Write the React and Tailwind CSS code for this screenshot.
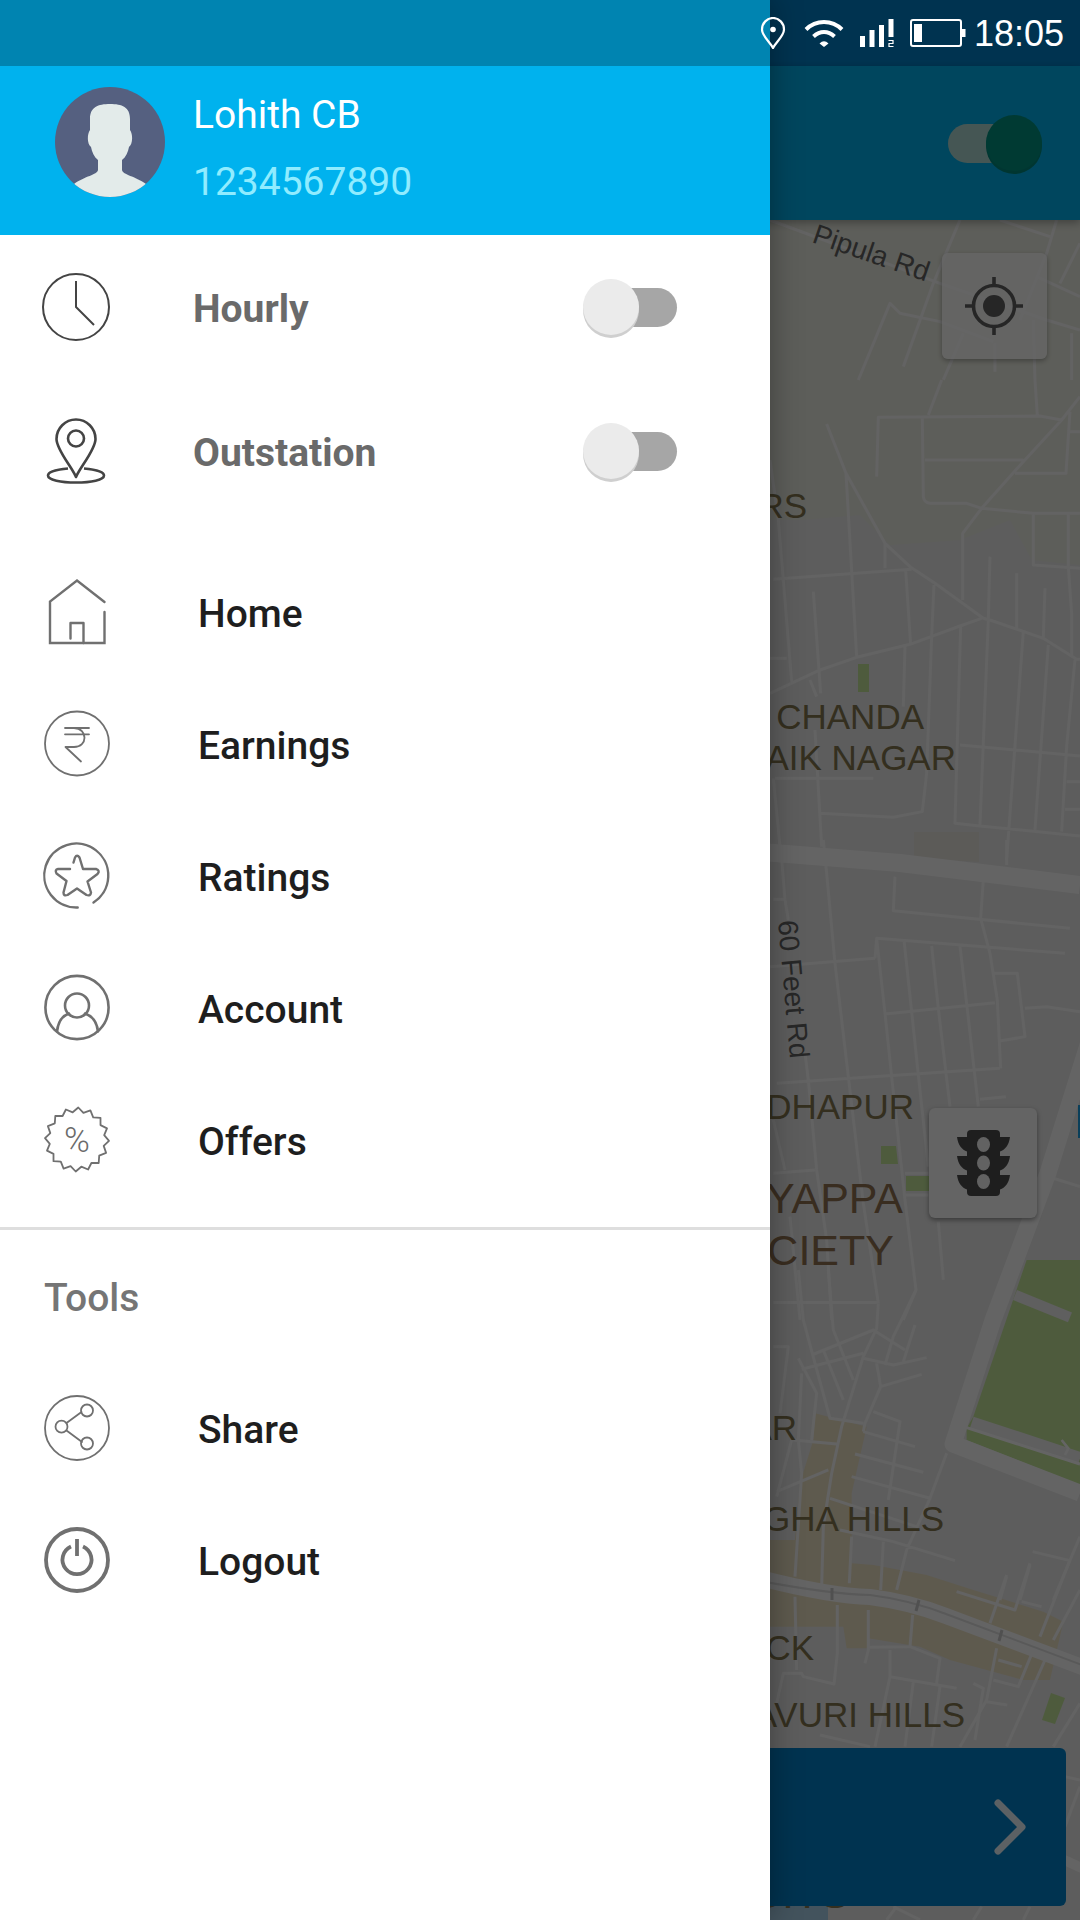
import { useState } from 'react'

const LINE_ICONS = {
  home: (
    <g strokeWidth="2.4">
      <path d="M60.5 22 33 0.5 6 21.5V63H60.5V32" strokeLinejoin="miter" />
      <path d="M26.5 58.5V43H39.5V63" />
    </g>
  ),
  earnings: (
    <g strokeWidth="1.8">
      <circle cx="33" cy="31.5" r="32" />
      <path d="M21 16H45M21 22.3H45M21 16H30C44 16.5 44 35 30 35H21.5L37 49.5" />
    </g>
  ),
  ratings: (
    <g strokeWidth="2.4">
      <path d="M49.5 58.5A32 32 0 1 0 33.7 63.5" />
      <path d="M29.5 18.5 31 13.5Q33 10 35.5 13.5L39 25H52Q56.5 26.5 53.5 30L43.5 37.5 47 48.5Q46.5 52.5 42.5 51L33 44.5 23.5 51Q19.5 52.5 19.5 48.5L22.5 37 12.5 29.5Q10.5 25.5 14 25H26" />
    </g>
  ),
  account: (
    <g strokeWidth="2.6">
      <circle cx="33" cy="31.5" r="31.6" />
      <circle cx="33" cy="29.5" r="12" />
      <path d="M13 55.5C14 46 18 40 25 37.5M41 37.5C48 40 53 46 54 55.5" />
    </g>
  ),
  offers: (
    <g strokeWidth="1.8">
      <polygon points={burstPoints(33, 31.5, 32, 27.5, 16)} />
      <text
        x="33"
        y="43.5"
        textAnchor="middle"
        fontSize="35"
        fontWeight="300"
        fill="#6b6b6b"
        stroke="none"
      >
        %
      </text>
    </g>
  ),
  share: (
    <g strokeWidth="1.8">
      <circle cx="33" cy="32" r="32" />
      <circle cx="43" cy="14.5" r="6" />
      <circle cx="17.5" cy="30.7" r="6" />
      <circle cx="43" cy="47.5" r="6" />
      <path d="M22.5 27 37.5 16M22.5 34.5 38 46" />
    </g>
  ),
  logout: (
    <g strokeWidth="3.8">
      <circle cx="33" cy="32" r="31" />
      <path d="M27 18.5A14.5 14.5 0 1 0 39 18.5" strokeLinecap="butt" />
      <path d="M33 11V28" strokeLinecap="butt" />
    </g>
  )
}

const NAV_ITEMS = [
  { id: 'home', label: 'Home' },
  { id: 'earnings', label: 'Earnings' },
  { id: 'ratings', label: 'Ratings' },
  { id: 'account', label: 'Account' },
  { id: 'offers', label: 'Offers' }
]

const TOOL_ITEMS = [
  { id: 'share', label: 'Share' },
  { id: 'logout', label: 'Logout' }
]

// Local streets, grouped by map tile. Tile units are a third of a map unit.
const STREET_TILES = [
  {
    x: 700,
    y: 0,
    d: 'M210 660 720 850M1040 960 1140 990M720 850 1040 960M780 660 700 850 610 1100M900 660 1050 710M1070 660 1040 760 960 960M1140 730 1080 850M1140 890 1010 830M475 1140 570 910 600 940 720 965 880 1025M790 1000 730 1140M885 1030V1115M1000 960 1005 1140M1115 1000V1140'
  },
  {
    x: 760,
    y: 380,
    d: 'M545 0 505 105M825 0 832 105M350 290 355 112 840 108 905 120M960 50 905 120 790 245 665 385 608 460V660M487 115 490 350Q492 368 510 370H620L665 385 820 400H960M495 240H790M765 280H918L930 95M930 155H960M820 400V555L960 565M925 400V560L935 700V830M200 132 258 280 375 490 450 560 525 610 670 715 690 720 850 775 950 838H960M258 280 290 830M375 490V565M40 598 455 568M30 240 55 420 95 905M160 635 182 940M437 570 452 795M522 615 515 770M30 940 180 870 290 832 450 793 600 738 665 715M690 530 685 720 660 1335M770 580V745M855 625 850 775M435 800 430 980M515 770 500 1180 487 1295 400 1312 180 1300M602 740 585 1330 660 1338 960 1368M790 755 740 1440M865 795 825 1350M945 840 920 1100 905 1355M45 1195H340M600 1095 960 1128M165 1050 185 1400M30 835H80M40 1195 60 1400M150 900 170 950M920 1205H960M915 1288H960'
  },
  {
    x: 760,
    y: 840,
    d: 'M65 60 75 180 85 240M40 178H75M190 0 200 100 225 370 265 710 310 1090 355 1390M405 110 400 212 930 265M670 120 662 235 690 340 712 480 722 685M740 0V75M345 355 350 295 915 340M350 295 375 520 395 710 435 1080 468 1350 430 1440M432 300 455 515 475 705 505 980M515 318 535 505 570 800M600 318 620 490 655 800M375 522 705 488M700 400H772L795 590 720 603M795 505 860 500 960 515M30 380 345 355M50 730 720 685M660 778 738 770M135 640 145 720 170 990 200 1200 215 1440M40 1000 165 990M40 840 75 990M90 1130 120 1440M435 1000H505M435 1065H505M535 1145 550 1320M40 1388H350M880 1015 960 1040'
  },
  {
    x: 760,
    y: 1240,
    d: 'M115 90 130 240 165 370 210 535 310 550M205 90 220 270 280 420M355 190 350 265 310 350 245 560 215 700 190 860 185 1040M468 150 400 290 375 375M155 345 340 270 435 330M125 388 310 340M310 355 400 375 500 353M465 255 430 365M350 370 362 440 315 550 310 575M362 440 485 403M115 355 170 460 155 600M125 400 115 600 125 700 105 1010M190 330 250 480M40 320H85L60 520M340 515 420 545 385 780M310 575 465 620M285 642 490 697M275 710 510 775M100 600 230 612M50 755 205 690M95 600 50 770M210 775 470 860M240 870 400 905 585 962M275 890 268 1030M370 905 362 1050M560 640 510 775 440 930 410 1050M818 935 930 962M960 890 880 1080M810 975 780 1080M740 1010 720 1080'
  },
  {
    x: 760,
    y: 1560,
    d: 'M740 45 690 190M590 95 765 150 810 10M785 125 845 140M930 0 840 230M960 90 880 240M960 430 880 560M105 110 110 330M232 135V280L222 372 130 350 125 340H70L50 430M325 150V270L315 310M458 165 450 260M325 262 450 260 540 295 530 370M390 270V350L345 560M390 350 590 385M460 365 435 560M540 380 515 560M710 265 680 420 600 560M715 300 785 320M700 360 775 380 820 270M640 370 670 385 645 540M680 425 742 435M180 525 330 560M855 300 740 560M915 650 960 660M960 680 915 800M380 1080 410 1040M640 1080 665 1040M790 1080 810 1040M400 1040 480 1080'
  }
]

const PLACE_LABELS = [
  { text: 'RS', x: 807, y: 518, size: 35 },
  { text: 'CHANDA', x: 924, y: 729, size: 35 },
  { text: 'AIK NAGAR', x: 956, y: 770, size: 35 },
  { text: 'DHAPUR', x: 914, y: 1119, size: 35 },
  { text: 'YAPPA', x: 903, y: 1213, size: 43, warm: true },
  { text: 'CIETY', x: 894, y: 1265, size: 43, warm: true },
  { text: 'AR', x: 797, y: 1440, size: 35 },
  { text: 'GHA HILLS', x: 944, y: 1531, size: 35 },
  { text: 'CK', x: 814, y: 1660, size: 35 },
  { text: 'AVURI HILLS', x: 965, y: 1727, size: 35 },
  { text: 'GITS', x: 849, y: 1908, size: 43 }
]

function burstPoints(cx, cy, outer, inner, count) {
  const points = []
  for (let i = 0; i < count * 2; i++) {
    const radius = i % 2 === 0 ? outer : inner
    const angle = (Math.PI * i) / count - Math.PI / 2 + 0.04
    points.push(`${(cx + radius * Math.cos(angle)).toFixed(1)},${(cy + radius * Math.sin(angle)).toFixed(1)}`)
  }
  return points.join(' ')
}

function StatusBar() {
  return (
    <div className="[grid-area:1/1] z-30 self-start h-[66px] pr-4 flex items-center justify-end gap-2 text-white">
      <div className="flex items-center gap-4">
        <svg className="w-7 h-8" viewBox="0 0 28 32" fill="none" stroke="currentColor" strokeWidth="2.2">
          <path d="M13 31C10 25 2 19 2 12.5A11 11.5 0 0 1 24 12.5C24 19 16 25 13 31Z" />
          <circle cx="13" cy="12.5" r="2.8" fill="currentColor" stroke="none" />
        </svg>
        <svg className="w-10 h-7" viewBox="0 0 40 28" fill="none" stroke="currentColor" strokeWidth="4">
          <path d="M2 10.5C12 .5 28 .5 38 10.5" />
          <path d="M9.5 17.5C16 11.5 24 11.5 30.5 17.5" />
          <path d="M15.5 24.5Q20 20 24.5 24.5L20 28Z" fill="currentColor" stroke="none" />
        </svg>
        <svg className="w-[34px] h-7" viewBox="0 0 34 28" fill="currentColor">
          <path d="M0 17H5V28H0ZM9.5 11H14.5V28H9.5ZM19 6H24V28H19ZM28.5 0H33.5V18H28.5Z" />
          <path d="M28.5 21.5H33V24.5H29V27.5H33.5" fill="none" stroke="currentColor" strokeWidth="1.2" />
        </svg>
        <svg className="w-14 h-7" viewBox="0 0 56 28">
          <rect x="1" y="1" width="50" height="26" rx="2" fill="none" stroke="currentColor" strokeWidth="2" />
          <path d="M4 5H12V23H4ZM52 10H55.5V18H52Z" fill="currentColor" />
        </svg>
      </div>
      <time className="pt-0.5 font-['Liberation_Sans',sans-serif] text-[36px] leading-none">18:05</time>
    </div>
  )
}

function Switch({ checked, onChange, label, id }) {
  return (
    <span className="relative flex items-center w-[94px] h-14 flex-shrink-0">
      <input
        id={id}
        type="checkbox"
        role="switch"
        aria-label={label}
        checked={checked}
        onChange={(e) => onChange(e.target.checked)}
        className="peer absolute inset-0 z-10 w-full h-full opacity-0 cursor-pointer"
      />
      <span className="w-[86px] h-[39px] rounded-full ml-2 bg-[#a6a6a6] peer-checked:ml-0 peer-checked:bg-[#add7d2]" />
      <span className="absolute left-0 top-0 w-14 h-14 rounded-full bg-[#ebebeb] shadow-[0_3px_0_#cfcfcf] peer-checked:left-auto peer-checked:right-0 peer-checked:bg-[#009180] peer-checked:shadow-[0_3px_0_#00887c]" />
    </span>
  )
}

function CityMap() {
  return (
    <svg
      className="absolute inset-0 w-full h-full font-['Liberation_Sans',sans-serif]"
      viewBox="0 220 1080 1700"
      preserveAspectRatio="xMaxYMin slice"
      role="img"
      aria-label="Map"
    >
      <rect y="220" width="1080" height="1700" fill="#e8e8e8" />
      <path d="M0 220H1080V565L1032 560 1010 520 960 540 890 545 860 515 800 520 0 520Z" fill="#e9ebe0" />

      {/* Built-up areas and parks */}
      <g transform="translate(760 1240) scale(.3333)">
        <path d="M165 520 320 560 275 760V970L340 975 500 1005 640 1050 850 1115 910 1145 870 1320H790L570 1260 480 1220 325 1195 320 1225H260L250 1160H0V900H105L120 730 160 600Z" fill="#ebe1c3" />
        <path d="M800 60H960V735L620 600V565L640 530Z" fill="#c2e498" />
        <path d="M765 165 930 232" stroke="#ededed" strokeWidth="32" />
        <path d="M635 548 960 655" stroke="#ededed" strokeWidth="38" />
        <path d="M620 563 960 672" stroke="#fbfbfb" strokeWidth="9" />
        <path d="M905 600 925 625 915 645" fill="none" stroke="#fbfbfb" strokeWidth="8" />
      </g>
      <path d="M858 664H869V692H858Z" fill="#c2e498" />
      <path d="M881 1146H896L898 1164H881ZM906 1176H930V1191H906Z" fill="#c2e498" />
      <path d="M1051 1693 1065 1698 1055 1724 1042 1720Z" fill="#c2e498" />
      <path d="M914 832H979V862L914 858Z" fill="#e6e3dc" />
      <path d="M760 1904H828V1920H760Z" fill="#a8cfe8" />
      <path d="M1078 1105H1080V1138H1078Z" fill="#1a9fe0" />

      {/* Streets */}
      {STREET_TILES.map((tile) => (
        <path
          key={tile.y}
          d={tile.d}
          transform={`translate(${tile.x} ${tile.y}) scale(.3333)`}
          fill="none"
          stroke="#f7f7f7"
          strokeWidth="9"
          strokeLinejoin="round"
        />
      ))}
      <g fill="none" stroke="#fafafa" strokeLinejoin="round">
        <path d="M700 847 900 863 1080 885" strokeWidth="18" />
        <path d="M1088 1045 1048 1173 993 1320 953 1444 1080 1493" strokeWidth="17" />
        <path d="M760 1578Q830 1596 870 1597Q910 1602 946 1616L1090 1670" strokeWidth="16" />
        <path d="M760 1581Q830 1594 870 1595Q910 1600 946 1614L1090 1668" stroke="#dedede" strokeWidth="2" />
        <path d="M832 1588V1600M919 1600 916 1611M1002 1630 999 1641" stroke="#c8c8c8" strokeWidth="3" />
        <path d="M1060 1858 1090 1872" strokeWidth="10" />
      </g>

      {/* Labels */}
      <text transform="translate(811 242) rotate(19)" fontSize="28" fill="#626262">
        Pipula Rd
      </text>
      <text transform="translate(778 921) rotate(85)" fontSize="28" fill="#626262">
        60 Feet Rd
      </text>
      {PLACE_LABELS.map((place) => (
        <text
          key={place.text}
          x={place.x}
          y={place.y}
          fontSize={place.size}
          textAnchor="end"
          fill={place.warm ? '#8f7050' : '#82754e'}
        >
          {place.text}
        </text>
      ))}
    </svg>
  )
}

function MapScreen({ online, onOnlineChange }) {
  return (
    <div className="[grid-area:1/1] flex flex-col">
      <div className="h-[66px] bg-[#0080c8]" />
      <header className="relative z-10 h-[154px] pr-[38px] flex items-center justify-end bg-[#00b0ea] shadow-[0_3px_8px_rgba(0,0,0,0.3)]">
        <Switch checked={online} onChange={onOnlineChange} label="Online" id="online" />
      </header>
      <main className="relative flex-1 flex flex-col">
        <CityMap />
        <div className="relative flex-1 flex flex-col items-end pt-[33px] pr-[33px]">
          <button
            aria-label="My location"
            className="w-[105px] h-[106px] flex items-center justify-center rounded-md bg-white/75 shadow-[0_2px_5px_rgba(0,0,0,0.3)]"
          >
            <svg className="w-[60px] h-[60px]" viewBox="0 0 60 60" fill="none" stroke="#606060" strokeWidth="3.6">
              <circle cx="29" cy="30" r="20.5" />
              <circle cx="29" cy="30" r="11" fill="#606060" stroke="none" />
              <path d="M29 1V10M29 50V59M0 30H9M49 30H58" />
            </svg>
          </button>
          <button
            aria-label="Traffic"
            className="w-[108px] h-[110px] mt-[749px] mr-2.5 flex items-center justify-center rounded-md bg-[#fafafa] shadow-[0_2px_5px_rgba(0,0,0,0.4)]"
          >
            <svg className="w-[53px] h-[66px]" viewBox="0 0 53 66">
              <g fill="#4c4c4c">
                <rect x="10" y="0" width="33" height="66" rx="4" />
                <path d="M0 7H53C52 15 48 20 43 21.5H10C5 20 1 15 0 7Z" />
                <path d="M0 26H53C52 34 48 39 43 40.5H10C5 39 1 34 0 26Z" />
                <path d="M0 45H53C52 53 48 58 43 59.5H10C5 58 1 53 0 45Z" />
              </g>
              <g fill="#f4f4f4">
                <ellipse cx="26.5" cy="14.5" rx="6.5" ry="7.5" />
                <ellipse cx="26.5" cy="33" rx="6.5" ry="7.5" />
                <ellipse cx="26.5" cy="51.5" rx="6.5" ry="7.5" />
              </g>
            </svg>
          </button>
        </div>
        <button
          aria-label="Continue"
          className="relative mx-3.5 mb-3.5 h-[158px] pr-10 flex items-center justify-end rounded-md bg-[#0080c8]"
        >
          <svg className="w-8 h-14" viewBox="0 0 32 56" fill="none" stroke="#fff" strokeOpacity=".9" strokeWidth="7">
            <path d="M4 4 28 28 4 52" strokeLinecap="round" strokeLinejoin="round" />
          </svg>
        </button>
      </main>
    </div>
  )
}

function Avatar() {
  return (
    <svg className="w-[110px] h-[110px] mt-[21px] self-start flex-shrink-0" viewBox="0 0 110 110">
      <clipPath id="avatar-clip">
        <circle cx="55" cy="55" r="55" />
      </clipPath>
      <g clipPath="url(#avatar-clip)">
        <rect width="110" height="110" fill="#556080" />
        <path
          d="M10 110 19 97C30 89 42 88 43 83V73C39 70 37 65 36 60C32 57 32 47 35 43V32C35 20 43 17 55 17S75 20 75 32V43C78 47 78 57 74 60C73 65 71 70 67 73V83C68 88 80 89 91 97L100 110Z"
          fill="#e3ebea"
        />
      </g>
    </svg>
  )
}

function ToggleRow({ id, label, checked, onChange, children }) {
  return (
    <div className="h-36 pl-[42px] pr-[93px] flex items-center">
      <svg
        className="w-[68px] h-[68px] mr-[83px] flex-shrink-0 overflow-visible"
        viewBox="0 0 68 68"
        fill="none"
        stroke="#444"
        strokeLinejoin="round"
      >
        {children}
      </svg>
      <label htmlFor={id} className="flex-1 pt-[3px] text-[39px] leading-[46px] font-bold text-[#6a6a6a]">
        {label}
      </label>
      <Switch id={id} label={label} checked={checked} onChange={onChange} />
    </div>
  )
}

function NavRow({ item }) {
  return (
    <li>
      <a href={`#${item.id}`} className="h-[132px] pl-11 flex items-center gap-[88px]">
        <svg
          className="w-[66px] h-[66px] flex-shrink-0 overflow-visible"
          viewBox="0 -1 66 66"
          fill="none"
          stroke="#707070"
          strokeLinecap="round"
          strokeLinejoin="round"
        >
          {LINE_ICONS[item.id]}
        </svg>
        <span className="pt-[3px] text-[39px] leading-[46px] font-medium text-[#1e1e1e]">{item.label}</span>
      </a>
    </li>
  )
}

function Drawer() {
  const [hourly, setHourly] = useState(false)
  const [outstation, setOutstation] = useState(false)

  return (
    <aside className="[grid-area:1/1] z-20 w-[770px] max-w-[90%] bg-white shadow-[0_0_30px_rgba(0,0,0,0.35)]">
      <div className="h-[66px] bg-[#0084b1]" />
      <div className="h-[169px] pl-[55px] flex items-center gap-7 bg-[#00b2ee] text-[39px] leading-[67px]">
        <Avatar />
        <div className="pb-[3px]">
          <p className="text-white">Lohith CB</p>
          <p className="text-[#90ecff]">1234567890</p>
        </div>
      </div>

      {/* Ride type toggles */}
      <ToggleRow id="hourly" label="Hourly" checked={hourly} onChange={setHourly}>
        <circle cx="34" cy="34" r="33" strokeWidth="2" />
        <path d="M34 8V34L52 52" strokeWidth="2" />
      </ToggleRow>
      <ToggleRow id="outstation" label="Outstation" checked={outstation} onChange={setOutstation}>
        <g strokeWidth="2.6">
          <path d="M34 60C30 50 14.5 33 14.5 22A19.5 19.5 0 0 1 53.5 22C53.5 33 38 50 34 60Z" />
          <circle cx="34" cy="21.5" r="8" />
          <path d="M26 51.5C14 52.5 6 55 6 58.5C6 63 19 65.5 34 65.5S62 63 62 58.5C62 55 54 52.5 42 51.5" />
        </g>
      </ToggleRow>

      <nav className="pt-[23px]">
        <ul>
          {NAV_ITEMS.map((item) => (
            <NavRow key={item.id} item={item} />
          ))}
        </ul>
        <hr className="mt-[21px] border-0 h-[3px] bg-[#dedede]" />
        <h2 className="h-[132px] pl-11 pt-[3px] flex items-center text-[39px] leading-[46px] font-medium text-[#757575]">
          Tools
        </h2>
        <ul>
          {TOOL_ITEMS.map((item) => (
            <NavRow key={item.id} item={item} />
          ))}
        </ul>
      </nav>
    </aside>
  )
}

export default function App() {
  const [online, setOnline] = useState(true)

  return (
    <div className="grid min-h-screen overflow-hidden font-['Roboto',sans-serif]">
      <MapScreen online={online} onOnlineChange={setOnline} />
      <div className="[grid-area:1/1] z-10 bg-black/60" />
      <Drawer />
      <StatusBar />
    </div>
  )
}
